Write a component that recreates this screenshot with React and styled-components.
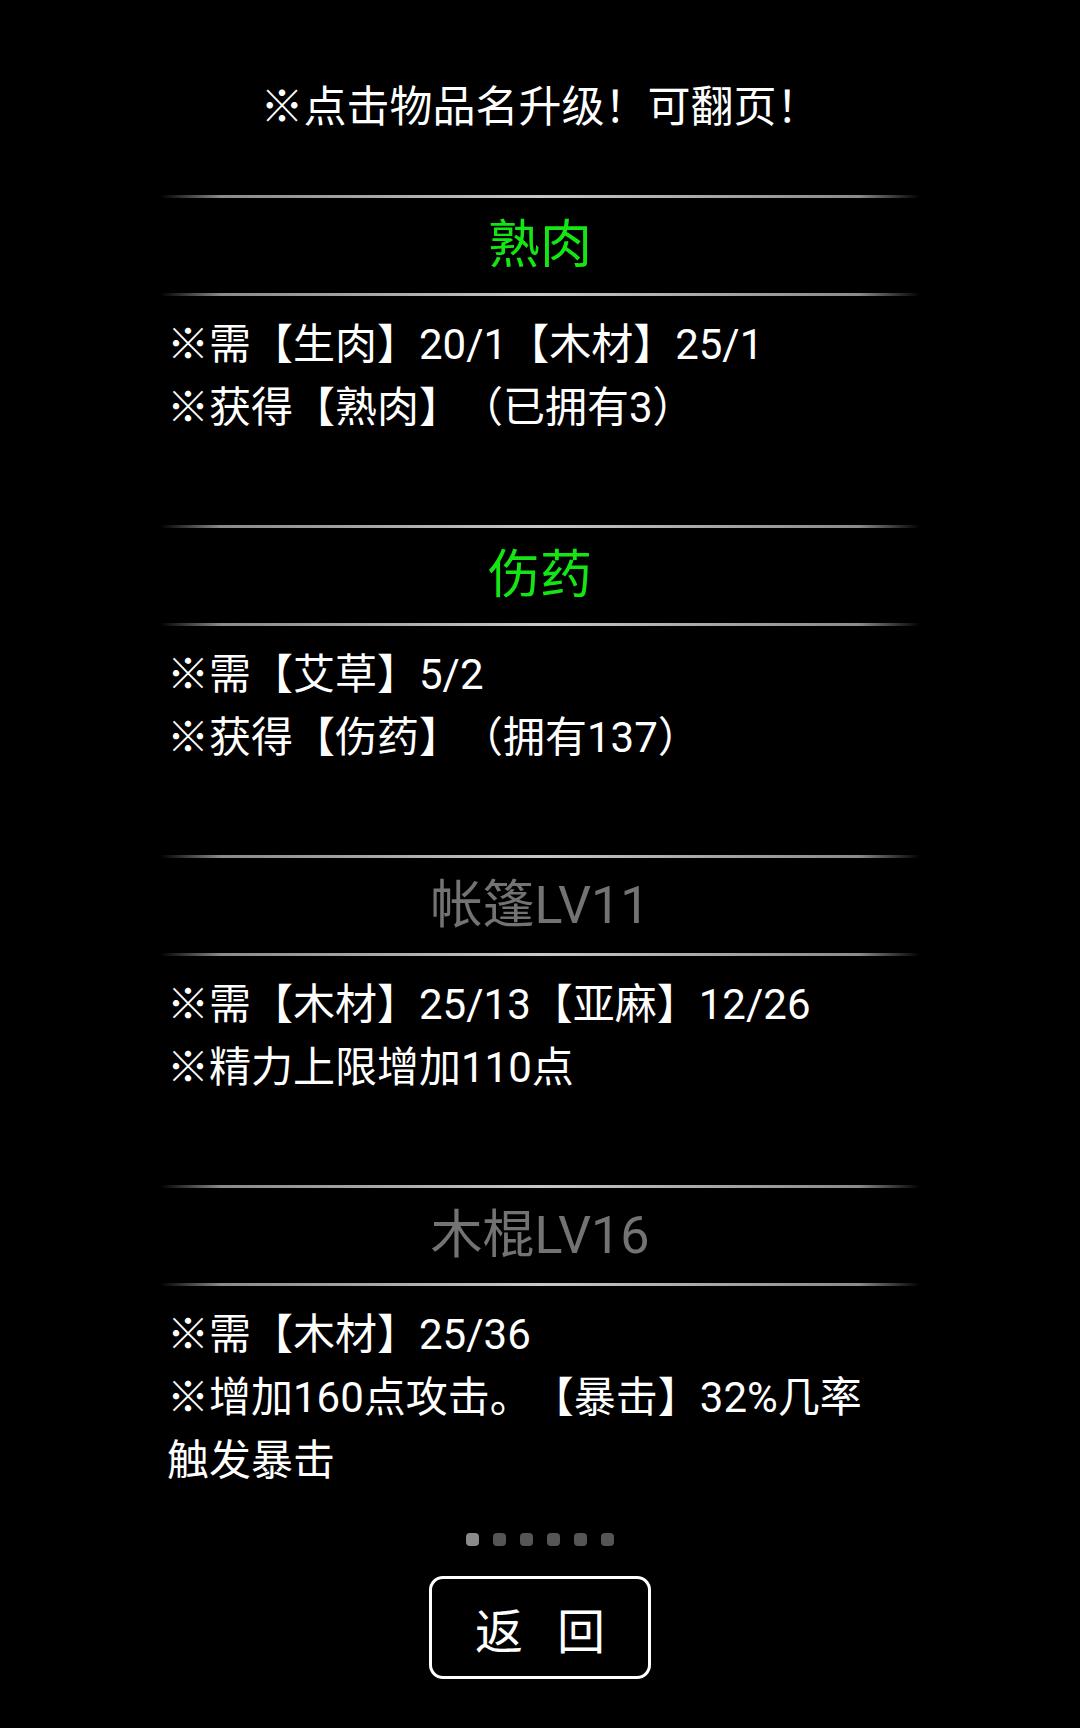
import React from 'react';
import styled, { createGlobalStyle } from 'styled-components';

const GlobalStyle = createGlobalStyle`
  html, body {
    margin: 0;
    padding: 0;
    background: #000;
  }
  body {
    font-family: "Roboto", "Noto Sans CJK SC", sans-serif;
    color: #fff;
    text-spacing-trim: space-all;
  }
`;

const items = [
  {
    name: '熟肉',
    active: true,
    lines: ['※需【生肉】20/1【木材】25/1', '※获得【熟肉】（已拥有3）'],
  },
  {
    name: '伤药',
    active: true,
    lines: ['※需【艾草】5/2', '※获得【伤药】（拥有137）'],
  },
  {
    name: '帐篷LV11',
    active: false,
    lines: ['※需【木材】25/13【亚麻】12/26', '※精力上限增加110点'],
  },
  {
    name: '木棍LV16',
    active: false,
    lines: ['※需【木材】25/36', '※增加160点攻击。【暴击】32%几率触发暴击'],
  },
];

const App = () => {
  return (
    <Page>
      <GlobalStyle />
      <Hint>※点击物品名升级！可翻页！</Hint>
      <List>
        {items.map((item) => (
          <Section key={item.name}>
            <Divider />
            <Name active={item.active}>{item.name}</Name>
            <Divider />
            <Desc>
              {item.lines.map((line) => (
                <DescLine key={line}>{line}</DescLine>
              ))}
            </Desc>
          </Section>
        ))}
      </List>
      <Dots>
        {[0, 1, 2, 3, 4, 5].map((i) => (
          <Dot key={i} current={i === 0} />
        ))}
      </Dots>
      <BackButton>返回</BackButton>
    </Page>
  );
};

export default App;

const Page = styled.div`
  width: 1080px;
  height: 1728px;
  background: #000;
  display: flex;
  flex-direction: column;
  align-items: center;
  overflow: hidden;
`;

const Hint = styled.div`
  padding-top: 82px;
  margin-bottom: 63px;
  height: 50px;
  line-height: 50px;
  font-size: 43px;
  color: #fff;
  text-align: center;
  text-spacing-trim: space-all;
`;

const List = styled.div`
  width: 760px;
  display: flex;
  flex-direction: column;
`;

const Section = styled.div`
  display: flex;
  flex-direction: column;
`;

const Divider = styled.div`
  height: 3px;
  background: linear-gradient(
    to right,
    rgba(120, 120, 120, 0) 0%,
    #8a8a8a 8%,
    #c8c8c8 50%,
    #8a8a8a 92%,
    rgba(120, 120, 120, 0) 100%
  );
`;

const Name = styled.div`
  height: 95px;
  line-height: 95px;
  text-align: center;
  font-size: 52px;
  color: ${(p) => (p.active ? '#14e614' : '#737373')};
`;

const Desc = styled.div`
  min-height: 212px;
  padding: 17px 33px 0 7px;
  display: flex;
  flex-direction: column;
`;

const DescLine = styled.div`
  font-size: 42px;
  line-height: 63px;
  color: #fff;
  text-spacing-trim: space-all;
`;

const Dots = styled.div`
  margin-top: 18px;
  display: flex;
  gap: 14px;
`;

const Dot = styled.div`
  width: 13px;
  height: 13px;
  border-radius: 4px;
  background: ${(p) => (p.current ? '#8a8a8a' : '#555')};
`;

const BackButton = styled.button`
  margin-top: 30px;
  width: 222px;
  height: 103px;
  box-sizing: border-box;
  border: 3px solid #fff;
  border-radius: 14px;
  background: #000;
  color: #fff;
  font-family: "Roboto", "Noto Sans CJK SC", sans-serif;
  font-size: 48px;
  letter-spacing: 34px;
  padding: 0 0 0 34px;
  display: flex;
  align-items: center;
  justify-content: center;
`;
